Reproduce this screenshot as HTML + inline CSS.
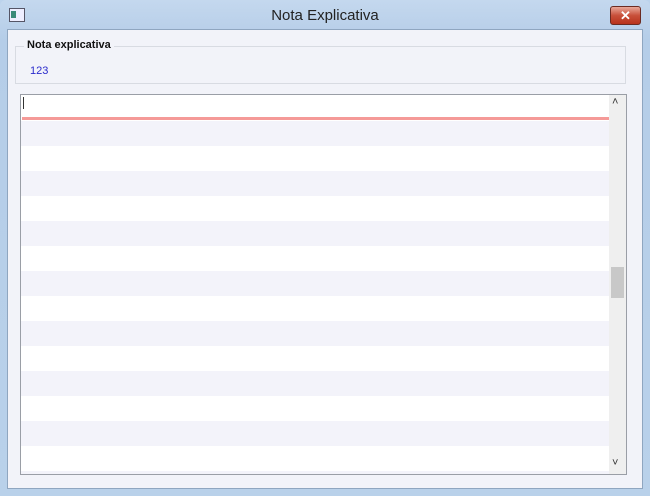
<html><head><style>
body{margin:0;width:650px;height:496px;background:#bcd3ec;font-family:"Liberation Sans",sans-serif;position:relative;overflow:hidden}
.a{position:absolute}
</style></head><body>
<div class="a" style="left:0;top:0;width:650px;height:496px;background:linear-gradient(#c4d8ee,#b5cde8 40px,#b9d1ea);border-radius:6px 6px 0 0"></div>
<div class="a" style="top:8px;left:9px;width:14px;height:12px;border:1px solid #556;background:#eef;"></div>
<div class="a" style="left:11px;top:11px;width:5px;height:7px;background:#3a8a7a"></div>
<div class="a" style="left:0;width:650px;top:7px;text-align:center;font-size:15px;color:#222">Nota Explicativa</div>
<div class="a" style="left:610px;top:6px;width:29px;height:17px;border:1px solid #6b2b22;border-radius:3px;background:linear-gradient(#e9a89a,#c8503a 50%,#b8321c);color:#fff;font-size:13px;font-weight:bold;text-align:center;line-height:17px">✕</div>
<div class="a" style="left:7px;top:29px;width:636px;height:460px;background:#f2f3f9;border:1px solid #8fa6c0;box-sizing:border-box"></div>
<div class="a" style="left:15px;top:46px;width:611px;height:38px;border:1px solid #d8dbe2;box-sizing:border-box"></div>
<div class="a" style="left:24px;top:39px;background:#f2f3f9;padding:0 3px;font-size:11px;font-weight:bold;color:#111">Nota explicativa</div>
<div class="a" style="left:30px;top:65px;font-size:11px;color:#2a2acc">123</div>
<div class="a" style="left:20px;top:94px;width:607px;height:381px;border:1px solid #9a9ea6;box-sizing:border-box;background:#fff;overflow:hidden">
<div class="a" style="left:0;top:1px;width:588px;height:378px;background:repeating-linear-gradient(#fff 0 25px,#f3f3fa 25px 50px)"></div>
<div class="a" style="left:0;top:0;width:588px;height:26px;background:#fff"></div>
<div class="a" style="left:1px;top:22px;width:587px;height:3px;background:#f59a98"></div>
<div class="a" style="left:2px;top:2px;width:1px;height:12px;background:#333"></div>
<div class="a" style="left:588px;top:0;width:17px;height:379px;background:#efefef"></div>
<div class="a" style="left:590px;top:172px;width:13px;height:31px;background:#c8c8c8"></div>
<div class="a" style="left:591px;top:1px;font-size:11px;color:#333">&#708;</div>
<div class="a" style="left:591px;top:362px;font-size:11px;color:#333">&#709;</div>
</div>
</body></html>
